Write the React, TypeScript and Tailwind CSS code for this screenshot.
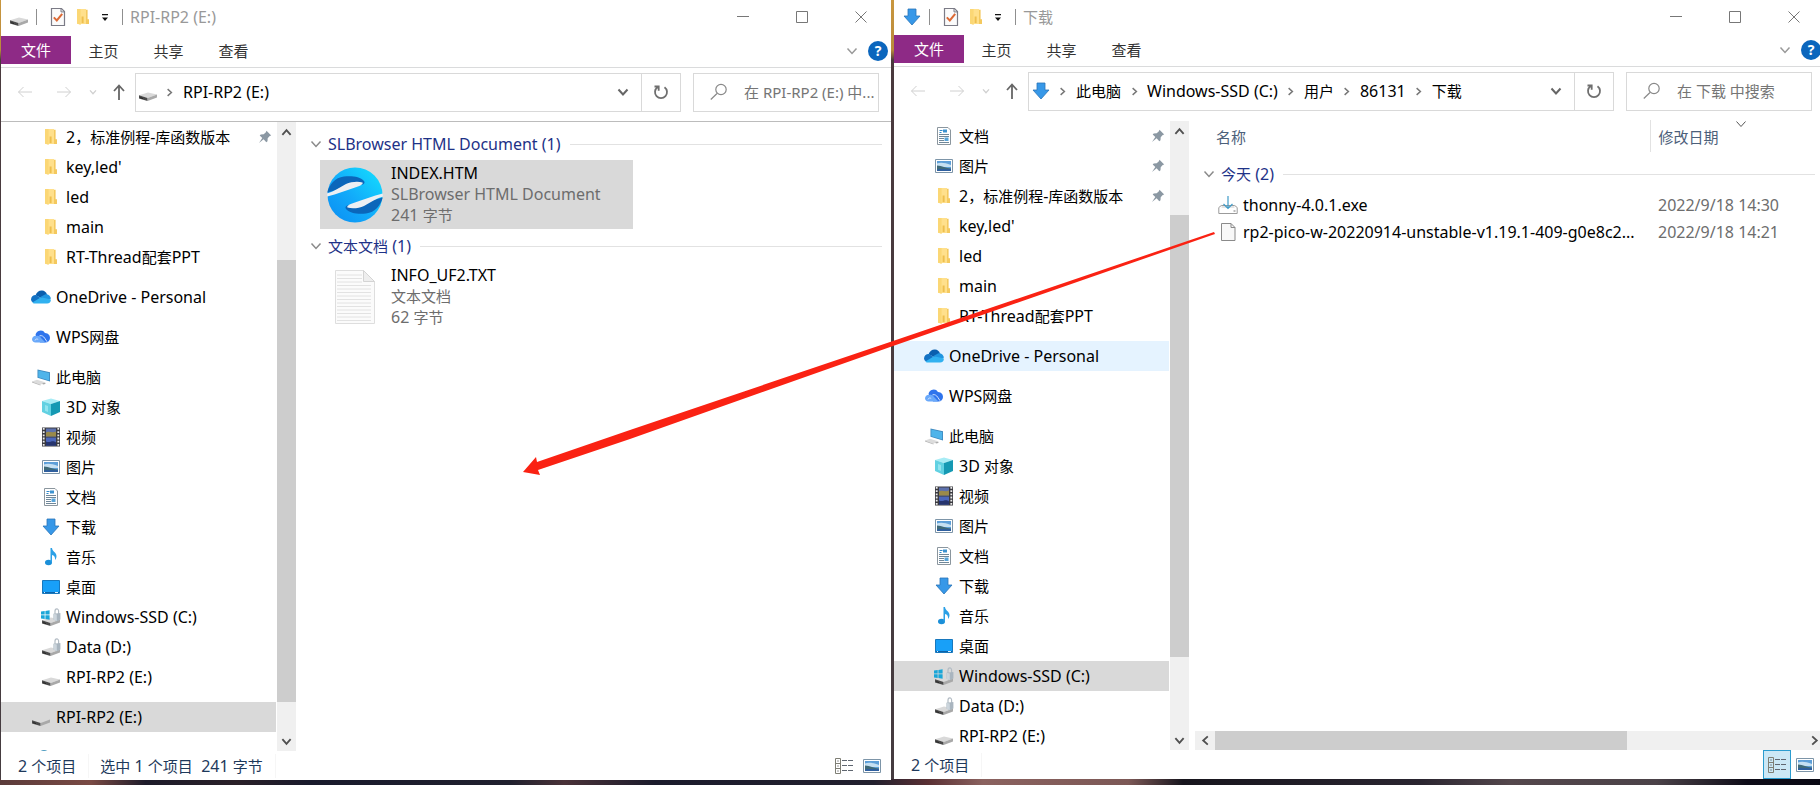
import { type ReactNode } from "react";
import clsx from "clsx";

type IconProps = { className?: string };

/* ---------- icons ---------- */

const DriveShape = () => (
  <>
    <path d="M1 13.2 10 10.4 19 12.4 9.6 16z" fill="#d9d9d9" />
    <path d="M1 13.2 9.6 16v3L1 16.4z" fill="#4a4a4a" />
    <path d="M9.6 16 19 12.4v3L9.6 19z" fill="#a9a9a9" />
    <path d="M2.2 15.2 5 16v.9l-2.8-.8z" fill="#222" />
  </>
);

const DriveIcon = ({ className }: IconProps) => (
  <svg viewBox="0 0 20 20" className={clsx("size-5", className)}>
    <DriveShape />
  </svg>
);

const LockShape = () => (
  <>
    <path
      d="M14 7V4.200a1.800 2.400 0 0 1 3.600 0V7"
      fill="none"
      stroke="#b3bcc4"
      strokeWidth="1.200"
    />
    <path d="M12.500 6.800 19.400 6v6.400l-3.600 1.800-3.300-1.600z" fill="#a9b5bf" />
    <path d="M12.500 6.800l3.300.8v6.600l-3.300-1.600z" fill="#ccd5dc" />
  </>
);

const LockedDriveIcon = () => (
  <svg viewBox="0 0 20 20" className="size-5">
    <DriveShape />
    <LockShape />
  </svg>
);

const SystemDriveIcon = () => (
  <svg viewBox="0 0 20 20" className="size-5">
    <DriveShape />
    <LockShape />
    <path
      d="M0 4.6 3.7 4v3.6H0zM4.4 3.9 8.6 3.2v4.4H4.4zM0 8.3h3.7v3.6L0 11.4zM4.4 8.3h4.2v4.5l-4.2-.7z"
      fill="#19a6d8"
    />
  </svg>
);

const FolderIcon = () => (
  <svg viewBox="0 0 20 20" className="size-5">
    <path d="M4 2h9v15H4z" fill="#ffe08c" />
    <path d="M13 2.8h1.6v9.4H16V17h-3z" fill="#f4c95f" />
    <path d="M4 2h3.6v16L4 16.6z" fill="#fbd775" />
    <path d="M8.6 9.5h2v6.6h-2z" fill="#eebf4e" />
  </svg>
);

const DownloadIcon = () => (
  <svg viewBox="0 0 20 20" className="size-5">
    <path
      d="M6 2h8v7h4l-8 9-8-9h4z"
      fill="#3798e8"
      stroke="#2a74b8"
      strokeWidth=".8"
    />
  </svg>
);

const CheckDocIcon = () => (
  <svg viewBox="0 0 20 20" className="size-5">
    <path
      d="M3.5 1.5h10l3 3v14h-13z"
      fill="#fbfbfb"
      stroke="#7b7b86"
      strokeWidth="1.2"
    />
    <path d="M13 1.5v3.4h3.5" fill="none" stroke="#7b7b86" />
    <path
      d="m5.8 10.4 3 3 5.4-6.6"
      fill="none"
      stroke="#dc6a36"
      strokeWidth="2"
    />
  </svg>
);

const OneDriveIcon = () => (
  <svg viewBox="0 0 20 20" className="size-5">
    <path
      d="M4.6 8.3C5.6 5 8.3 3.4 11 3.6c2.4.2 4.2 1.6 5 3.8l-4 4.6z"
      fill="#0a5fae"
    />
    <path
      d="M0 12.6C0 9.8 2.2 7.8 5 8l8.5 5.6L2 15.6A3.5 3.5 0 0 1 0 12.6z"
      fill="#1272c4"
    />
    <path d="M9.8 9.8 14 7.4c3-.6 5.6 1.6 5.9 4.2l-3.9 3z" fill="#1f95e0" />
    <path
      d="m1.4 15.4 8.6-5.2 9.9 2.4c0 2.4-1.5 4-3.9 4H4.2c-1.1 0-2.1-.4-2.8-1.2z"
      fill="#31b1f0"
    />
  </svg>
);

const WpsCloudIcon = () => (
  <svg viewBox="0 0 20 20" className="size-5">
    <path
      d="M4.5 8A5.2 5.2 0 0 1 14 6c3.500.2 5 2.500 5 5 0 2.600-2 4.500-4.500 4.500H9z"
      fill="#2f74ec"
    />
    <path
      d="M1 12.300A3.600 3.600 0 0 1 5.500 9c2-.6 3.500.5 4.500 2l4.500 4.500h-10C2.500 15.500 1 14 1 12.300z"
      fill="#6aa9fa"
    />
    <path
      d="M8.500 8.800c2.500-.6 4 .6 5.200 2.400l2.300 3.500M4 13.500c.3-1.500 2-2 3.200-1"
      fill="none"
      stroke="#cfe2ff"
    />
  </svg>
);

const ComputerIcon = () => (
  <svg viewBox="0 0 20 20" className="size-5">
    <path d="M6.5 2.5 19 5.2v9.3L6.5 10.8z" fill="#3c87bd" />
    <path d="M7.3 3.6 18.2 6v7.5L7.3 10.2z" fill="#4fb4ea" />
    <path d="M10 14.8 15 16l-2 1.600-5-1.300z" fill="#a8a8a8" />
    <path d="m1 14.600 5-1.800 8 2.400-4.500 2.500z" fill="#dcdcdc" />
    <path d="m1 14.600 8.500 3.100v.8L1 15.400z" fill="#b6b6b6" />
  </svg>
);

const CubeIcon = () => (
  <svg viewBox="0 0 20 20" className="size-5">
    <path d="M1 4 10 1.5 19 4l-9 3z" fill="#a8ecf5" />
    <path d="M1 4 10 7v12L1 15z" fill="#62d1e2" />
    <path d="M19 4 10 7v12l9-4z" fill="#1599b3" />
    <path d="m4 8 3 1v6l-3-1.200z" fill="#92e4ef" />
  </svg>
);

const VideoIcon = () => (
  <svg viewBox="0 0 20 20" className="size-5">
    <path d="M1 .5h18v19H1z" fill="#3a3a40" />
    <path d="M5 1.500h10v8H5z" fill="#5d71ad" />
    <path d="M5 10.500h10v8H5z" fill="#4b66bb" />
    <path d="M5 5.500c3-2 6 1 10-1v5H5z" fill="#9a8a4a" />
    <path d="M5 14.500c4 2 6-2 10 1v3H5z" fill="#26346e" />
    <path
      d="M2.700 1v18.500M17.300 1v18.500"
      stroke="#ececec"
      strokeWidth="1.800"
      strokeDasharray="1.800 1.400"
    />
  </svg>
);

const PictureIcon = () => (
  <svg viewBox="0 0 20 20" className="size-5">
    <path d="M1.500 3.500h17v13h-17z" fill="#fff" stroke="#7d95a8" />
    <path d="M3 5h14v10H3z" fill="#5d9fd8" />
    <path d="M3 7.500c3-1.500 8-1 14 1.500v2H3z" fill="#c5e0f2" />
    <path d="M3 9.500c5 .5 9 2.500 14 3V15H3z" fill="#3f6a78" />
    <path d="M3 13.500c5-1 9 0 14-.5v2H3z" fill="#2f5f9f" />
  </svg>
);

const DocumentIcon = () => (
  <svg viewBox="0 0 20 20" className="size-5">
    <path
      d="M3.500 1.500H14L16.500 4v14.500h-13z"
      fill="#fff"
      stroke="#8b969e"
    />
    <path d="M5.500 4.500h3M5.500 6.500h2" stroke="#2f87c8" />
    <path d="M9 3.500h4v3H9z" fill="#3d93d0" />
    <path
      d="M5 8.500h10M5 10.500h10M5 12.500h5M5 14.500h5M5 16.500h10"
      stroke="#6f8799"
    />
    <path d="M10.500 11.500h4v3.500h-4z" fill="#58a4d8" />
  </svg>
);

const MusicIcon = () => (
  <svg viewBox="0 0 20 20" className="size-5">
    <ellipse cx="7.500" cy="15.500" rx="3.500" ry="2.800" fill="#1b8fd8" />
    <path
      d="M9.500 15.500V1h1.500c.3 3.500 4.500 4.500 4.500 8 0 1.700-.6 3-1.500 4 .4-3-.8-4.500-3-5v7.500z"
      fill="#2ba0e6"
    />
  </svg>
);

const DesktopIcon = () => (
  <svg viewBox="0 0 20 20" className="size-5">
    <path d="M1.500 3.500h17v13h-17z" fill="#18a0f8" stroke="#1878bd" />
    <path d="M2 15.500h16" stroke="#0d62a8" />
    <path d="M3 15.500h1M14 15.500h3" stroke="#d8efff" />
  </svg>
);

const GlobeIcon = () => (
  <svg viewBox="0 0 20 20" className="size-5">
    <circle cx="13" cy="9" r="6" fill="#4d9cc0" />
  </svg>
);

const PinIcon = () => (
  <svg viewBox="0 0 14 14" className="size-[14px]">
    <path
      d="M8.500.8 13.200 5.500l-1.500.6-2 2.200-.2 3-1.200.9-2.700-2.900L1 13l3.300-5L1.700 5.500l1-1 3-.3 2.200-2z"
      fill="#8b98a3"
    />
  </svg>
);

const DetailsViewIcon = () => (
  <svg viewBox="0 0 20 18" className="h-[18px] w-5" fill="none">
    <path d="M1.500 1.500h5v15h-5zM1.500 6.500h5M1.500 11.500h5" stroke="#7e7e74" />
    <path d="M3.500 4h1M3.500 9h1M3.500 14h1" stroke="#333" />
    <path
      d="M8 3.500h5M14 3.500h5M8 8.500h5M14 8.500h5M8 13.500h5M14 13.500h5"
      stroke="#5f6670"
    />
  </svg>
);

const SetupIcon = () => (
  <svg viewBox="0 0 20 20" className="size-5" fill="none">
    <path d="M.8 18.500v-6l2.500-2h13.400l2.500 2v6z" stroke="#9b9b9b" />
    <path d="M3.500 12h13" stroke="#c9c9c9" />
    <path
      d="M10 1v12M5.500 9l4.500 4.500L14.500 9"
      stroke="#3f9bc8"
      strokeWidth="1.200"
    />
    <path d="M15.500 16h2" stroke="#777" />
  </svg>
);

const BlankFileIcon = () => (
  <svg viewBox="0 0 20 20" className="size-5">
    <path d="M3.500 1.500h9.500l4 4v13H3.500z" fill="#f8f8f8" stroke="#8a8a8a" />
    <path d="M13 1.500v4h4" fill="none" stroke="#8a8a8a" />
  </svg>
);

// one half of the swirl, the other half is the same shape turned around
const LogoSwirl = () => (
  <>
    <path
      d="M.3 25.500C2 18 8 10.500 17 9.500c8-.8 16 0 20 4.500 1 1.500.5 2.500-1 3.500L20 20z"
      fill="#0b66ba"
    />
    <path
      d="M0 26.500C8 24 13 20 19 17c5-2.300 12-3 16.500-1.500 1 1.500-2 3.200-6 4.500C20 23.200 10 27 .2 29.500z"
      fill="#eceff3"
    />
  </>
);

const BrowserLogo = () => (
  <svg viewBox="0 0 56 56" className="size-14">
    <defs>
      <linearGradient id="logo-fill" x1="0" y1="1" x2="1" y2="0">
        <stop offset="0" stopColor="#0a8cf2" />
        <stop offset=".45" stopColor="#12aafa" />
        <stop offset="1" stopColor="#14e2ff" />
      </linearGradient>
    </defs>
    <circle cx="28" cy="28" r="27.500" fill="url(#logo-fill)" />
    <LogoSwirl />
    <g transform="rotate(180 28 28)">
      <LogoSwirl />
    </g>
  </svg>
);

const TextFileIcon = () => (
  <svg viewBox="0 0 56 56" className="size-14">
    <path d="M8.500 1.500h28l11 11v42h-39z" fill="#fbfbfb" stroke="#dedede" />
    <path
      d="M10 6h25M10 9.500h25M10 13h25M10 16.500h34M10 20h34M10 23.500h34M10 27h34M10 30.500h34M10 34h34M10 37.500h34M10 41h34M10 44.500h34M10 48h34M10 51.500h34"
      stroke="#e2e2e2"
    />
    <path d="M36.500 1.500v11h11z" fill="#eee" stroke="#d4d4d4" />
  </svg>
);

const chevrons = {
  up: "m1.500 8.500 4.500-5 4.500 5",
  down: "m1.500 3.500 4.500 5 4.500-5",
  left: "m8.500 1.500-5 4.500 5 4.500",
  right: "m3.500 1.500 5 4.500-5 4.500",
};

const Chevron = ({
  dir,
  className = "size-3",
}: {
  dir: keyof typeof chevrons;
  className?: string;
}) => (
  <svg
    viewBox="0 0 12 12"
    className={className}
    fill="none"
    stroke="currentColor"
    strokeWidth="2"
  >
    <path d={chevrons[dir]} />
  </svg>
);

const Arrow = ({ className }: IconProps) => (
  <svg
    viewBox="0 0 16 16"
    className={clsx("size-4", className)}
    fill="none"
    stroke="currentColor"
  >
    <path d="M15 8H1.500M6.500 3 1.500 8l5 5" />
  </svg>
);

/* ---------- text ---------- */

// Han characters are set one pixel smaller than the Latin text next to them
const Label = ({ text }: { text: string }) => (
  <>
    {text.split(/([\u4e00-\u9fff，]+)/).map((part, i) =>
      i % 2 ? (
        <span key={i} className="text-[15px]">
          {part}
        </span>
      ) : (
        part
      )
    )}
  </>
);

/* ---------- data ---------- */

type NavItem = {
  text: string;
  icon: ReactNode;
  root?: boolean;
  pinned?: boolean;
  state?: "selected" | "hover";
};

const folders: NavItem[] = [
  { text: "2，标准例程-库函数版本", icon: <FolderIcon />, pinned: true },
  { text: "key,led'", icon: <FolderIcon /> },
  { text: "led", icon: <FolderIcon /> },
  { text: "main", icon: <FolderIcon /> },
  { text: "RT-Thread配套PPT", icon: <FolderIcon /> },
];

const clouds = (state?: NavItem["state"]): NavItem[] => [
  { text: "OneDrive - Personal", icon: <OneDriveIcon />, root: true, state },
  { text: "WPS网盘", icon: <WpsCloudIcon />, root: true },
];

const computer = (state?: NavItem["state"]): NavItem[] => [
  { text: "此电脑", icon: <ComputerIcon />, root: true },
  { text: "3D 对象", icon: <CubeIcon /> },
  { text: "视频", icon: <VideoIcon /> },
  { text: "图片", icon: <PictureIcon /> },
  { text: "文档", icon: <DocumentIcon /> },
  { text: "下载", icon: <DownloadIcon /> },
  { text: "音乐", icon: <MusicIcon /> },
  { text: "桌面", icon: <DesktopIcon /> },
  { text: "Windows-SSD (C:)", icon: <SystemDriveIcon />, state },
  { text: "Data (D:)", icon: <LockedDriveIcon /> },
  { text: "RPI-RP2 (E:)", icon: <DriveIcon /> },
];

const leftNav: NavItem[] = [
  ...folders,
  ...clouds(),
  ...computer(),
  { text: "RPI-RP2 (E:)", icon: <DriveIcon />, root: true, state: "selected" },
  { text: "", icon: <GlobeIcon />, root: true },
];

const rightNav: NavItem[] = [
  { text: "文档", icon: <DocumentIcon />, pinned: true },
  { text: "图片", icon: <PictureIcon />, pinned: true },
  ...folders,
  ...clouds("hover"),
  ...computer("selected"),
];

const files = [
  { name: "thonny-4.0.1.exe", date: "2022/9/18 14:30", icon: <SetupIcon /> },
  {
    name: "rp2-pico-w-20220914-unstable-v1.19.1-409-g0e8c2...",
    date: "2022/9/18 14:21",
    icon: <BlankFileIcon />,
  },
];

/* ---------- window parts ---------- */

const TitleBar = ({
  icon,
  title,
  className,
}: {
  icon: ReactNode;
  title: string;
  className: string;
}) => (
  <header className={clsx("flex shrink-0 items-center pb-[2px]", className)}>
    <div className="flex w-[35px] justify-center">{icon}</div>
    <div className="h-4 w-px bg-[#8f8f8f]" />
    <button className="ml-[11px]" aria-label="属性">
      <CheckDocIcon />
    </button>
    <button className="ml-[5px]" aria-label="新建文件夹">
      <FolderIcon />
    </button>
    <button className="ml-[7px]" aria-label="自定义快速访问工具栏">
      <svg viewBox="0 0 10 10" className="size-[10px]">
        <path d="M2 2h6v1.300H2zM2 5.500h6L5 9z" fill="#111" />
      </svg>
    </button>
    <div className="ml-[12px] h-4 w-px bg-[#8f8f8f]" />
    <h1 className="ml-[7px] text-[#999]">
      <Label text={title} />
    </h1>
    <div className="ml-auto flex h-full pr-px text-[#777]">
      {[
        { label: "最小化", d: "M0 5.500h12" },
        { label: "最大化", d: "M.5.500h11v11H.5z" },
        { label: "关闭", d: "m.5.500 11 11m0-11-11 11" },
      ].map(({ label, d }) => (
        <button
          key={label}
          aria-label={label}
          className="flex w-[59px] items-center justify-center"
        >
          <svg
            viewBox="0 0 12 12"
            className="size-3 overflow-visible"
            fill="none"
            stroke="currentColor"
          >
            <path d={d} />
          </svg>
        </button>
      ))}
    </div>
  </header>
);

const Ribbon = () => (
  <div className="flex h-8 shrink-0 items-start border-b border-[#dadbdc] text-[15px] text-[#333]">
    <button className="h-7 w-[70px] bg-[#8e2a86] text-white">文件</button>
    {["主页", "共享", "查看"].map((tab) => (
      <button key={tab} className="h-[30px] w-[65px]">
        {tab}
      </button>
    ))}
    <button className="mt-[9px] ml-auto text-[#999]" aria-label="展开功能区">
      <svg
        viewBox="0 0 12 12"
        className="size-3"
        fill="none"
        stroke="currentColor"
        strokeWidth="1.500"
      >
        <path d={chevrons.down} />
      </svg>
    </button>
    <button
      aria-label="帮助"
      className="mt-[5px] mr-[3px] ml-[10px] flex size-5 items-center justify-center rounded-full bg-[#0b66bd] text-sm font-bold text-white"
    >
      ?
    </button>
  </div>
);

const AddressBar = ({
  icon,
  crumbs,
  placeholder,
}: {
  icon: ReactNode;
  crumbs: string[];
  placeholder: string;
}) => (
  <div className="flex h-[53px] shrink-0 items-center pr-3 pb-[5px]">
    <nav className="flex w-[134px] shrink-0 items-center text-[#d0d0d0]">
      <button className="ml-4" aria-label="后退">
        <Arrow />
      </button>
      <button className="ml-[23px]" aria-label="前进">
        <Arrow className="rotate-180" />
      </button>
      <button className="ml-[17px]" aria-label="最近浏览的位置">
        <Chevron dir="down" className="size-2" />
      </button>
      <button className="ml-[14px] text-[#666]" aria-label="上移">
        <svg
          viewBox="0 0 16 16"
          className="size-4"
          fill="none"
          stroke="currentColor"
          strokeWidth="1.800"
        >
          <path d="M8 16V1.500M3 7l5-5.500L13 7" />
        </svg>
      </button>
    </nav>
    <div className="flex h-[39px] min-w-0 flex-1 items-center border border-[#d9d9d9]">
      <div className="ml-[2px]">{icon}</div>
      {crumbs.map((crumb, i) => (
        <div key={crumb} className="flex items-center">
          <div
            className={clsx(
              "flex justify-center text-[#777]",
              i === 0 ? "mr-[2px] w-[23px]" : "w-[26px]"
            )}
          >
            <Chevron dir="right" className="size-[9px]" />
          </div>
          <button className="whitespace-nowrap">
            <Label text={crumb} />
          </button>
        </div>
      ))}
      <button
        className="ml-auto flex w-[37px] justify-center text-[#666]"
        aria-label="以前的位置"
      >
        <Chevron dir="down" />
      </button>
      <button
        className="flex h-full w-[39px] items-center justify-center border-l border-[#d9d9d9]"
        aria-label="刷新"
      >
        <svg
          viewBox="0 0 16 16"
          className="size-4"
          fill="none"
          stroke="#6f6f6f"
          strokeWidth="1.800"
        >
          <path d="M11.500 3.200a6 6 0 1 1-7 0M1.500 2.500h4.200v4.300" />
        </svg>
      </button>
    </div>
    <label className="ml-3 flex h-[39px] w-[186px] shrink-0 items-center border border-[#d9d9d9]">
      <svg
        viewBox="0 0 18 18"
        className="ml-4 size-[18px] shrink-0"
        fill="none"
        stroke="#888"
        strokeWidth="1.200"
      >
        <circle cx="11" cy="6.500" r="5.200" />
        <path d="M7 10.500.8 16.500" />
      </svg>
      <input
        type="text"
        aria-label="搜索"
        placeholder={placeholder}
        className="ml-4 w-0 flex-1 text-[15px] outline-none placeholder:text-[#757575]"
      />
    </label>
  </div>
);

const Sidebar = ({ items, offset }: { items: NavItem[]; offset: number }) => (
  <>
    <ul className="w-[275px] shrink-0 overflow-hidden">
      {items.map(({ text, icon, root, pinned, state }, i) => (
        <li key={i} className={clsx(root && "mt-[10px]")}>
          <button
            className={clsx(
              "flex h-[30px] w-full items-center gap-[5px] pr-1",
              root ? "pl-[30px]" : "pl-10",
              state === "selected" && "bg-[#d9d9d9]",
              state === "hover" && "bg-[#e5f3ff]"
            )}
          >
            {icon}
            <span className="whitespace-nowrap">
              <Label text={text} />
            </span>
            {pinned && (
              <span className="ml-auto">
                <PinIcon />
              </span>
            )}
          </button>
        </li>
      ))}
    </ul>
    <div className="ml-px flex w-[19px] shrink-0 flex-col bg-[#f0f0f0] text-[#505050]">
      <button
        className="flex h-5 items-center justify-center"
        aria-label="向上滚动"
      >
        <Chevron dir="up" className="size-[11px]" />
      </button>
      <div className="flex min-h-0 flex-1 flex-col">
        <div style={{ height: `${offset}%` }} />
        <div className="h-3/4 bg-[#cdcdcd]" />
      </div>
      <button
        className="flex h-5 items-center justify-center"
        aria-label="向下滚动"
      >
        <Chevron dir="down" className="size-[11px]" />
      </button>
    </div>
  </>
);

const GroupHeader = ({ text }: { text: string }) => (
  <div className="flex h-[30px] items-center pr-[9px] pl-[14px] text-[#1e3287]">
    <svg
      viewBox="0 0 12 12"
      className="size-3"
      fill="none"
      stroke="#8a8a8a"
      strokeWidth="1.500"
    >
      <path d={chevrons.down} />
    </svg>
    <span className="mr-[9px] ml-[6px] whitespace-nowrap">
      <Label text={text} />
    </span>
    <div className="h-px flex-1 bg-[#e2e2e2]" />
  </div>
);

const Tile = ({
  icon,
  name,
  kind,
  size,
  selected,
}: {
  icon: ReactNode;
  name: string;
  kind: string;
  size: string;
  selected?: boolean;
}) => (
  <button
    className={clsx(
      "mt-px ml-6 flex h-[69px] w-[313px] items-center gap-2 pl-[7px] text-left",
      selected && "bg-[#d9d9d9]"
    )}
  >
    {icon}
    <div className="leading-[21px] text-[#6d6d6d]">
      <p className="text-black">{name}</p>
      <p>
        <Label text={kind} />
      </p>
      <p>
        <Label text={size} />
      </p>
    </div>
  </button>
);

const StatusBar = ({
  items,
  details,
}: {
  items: string[];
  details?: boolean;
}) => (
  <footer className="flex h-[29px] shrink-0 items-center pr-[9px] pl-[17px] text-[#1e395b]">
    {items.map((item, i) => (
      <span
        key={item}
        className={clsx(
          "border-r border-[#f6f6f6] pr-3 whitespace-pre",
          i > 0 && "pl-[11px]"
        )}
      >
        <Label text={item} />
      </span>
    ))}
    <button
      aria-label="详细信息"
      className={clsx(
        "ml-auto flex h-[29px] w-[28px] items-center justify-center",
        details && "border border-[#2b9ccf] bg-[#cbe8f6]"
      )}
    >
      <DetailsViewIcon />
    </button>
    <button aria-label="大图标" className="ml-1">
      <PictureIcon />
    </button>
  </footer>
);

const FileTable = () => (
  <table className="w-full table-fixed border-collapse text-left">
    <colgroup>
      <col className="w-[461px]" />
      <col />
    </colgroup>
    <thead className="text-[15px] text-[#4c607a]">
      <tr className="h-8">
        <th className="border-r border-[#e2e2e2] pt-[2px] pl-[27px] font-normal">
          名称
        </th>
        <th className="relative pt-[2px] pl-2 font-normal">
          修改日期
          <span className="absolute top-0 left-[84px] text-[#555]">
            <svg
              viewBox="0 0 12 8"
              className="h-2 w-3"
              fill="none"
              stroke="currentColor"
            >
              <path d="m1.500 1.500 4.500 5 4.500-5" />
            </svg>
          </span>
        </th>
      </tr>
    </thead>
    <tbody>
      <tr>
        <td colSpan={2} className="pt-[7px] pb-[2px]">
          <GroupHeader text="今天 (2)" />
        </td>
      </tr>
      {files.map(({ name, date, icon }) => (
        <tr key={name} className="h-[27px]">
          <td>
            <div className="flex items-center gap-[5px] pl-[29px] whitespace-nowrap">
              {icon}
              {name}
            </div>
          </td>
          <td className="pl-2 text-[#6d6d6d]">{date}</td>
        </tr>
      ))}
    </tbody>
  </table>
);

const DragArrow = () => (
  <svg
    viewBox="0 0 1820 785"
    preserveAspectRatio="none"
    className="pointer-events-none absolute inset-0 size-full"
  >
    <path
      d="M523 472 536 457l1 5 93-32 263-89 321-109 1 2-322 112-263 93-92 31 2 5z"
      fill="#fa2213"
    />
  </svg>
);

const App = () => {
  return (
    <div
      className="relative h-screen overflow-hidden bg-[linear-gradient(90deg,#5b3b3a_0%,#7a4a44_5%,#1d1b2a_8%,#2a2028_13%,#191a2c_17%,#20202e_28%,#4a3238_31%,#1b1b2c_36%,#22202e_48%,#5a3034_51%,#8b625f_54%,#7c5856_62%,#17151d_65%,#2a2530_78%,#54474c_83%,#4b4248_91%,#0e0c18_96%,#0a0914_100%)] text-base text-black"
      style={{
        fontFamily: '"Noto Sans", "Noto Sans CJK SC", sans-serif',
      }}
    >
      <div className="grid h-full grid-cols-[890fr_926fr] gap-[3px] bg-[linear-gradient(#c9973f_0px,#b98a3c_50px,#4a3a3e_60px,#453c40_100%)] bg-size-[100%_calc(100%-6px)] bg-no-repeat pb-[5px] pl-px">
        <section className="flex min-h-0 min-w-0 flex-col bg-white">
          <TitleBar
            className="h-9"
            icon={<DriveIcon />}
            title="RPI-RP2 (E:)"
          />
          <Ribbon />
          <AddressBar
            icon={<DriveIcon />}
            crumbs={["RPI-RP2 (E:)"]}
            placeholder="在 RPI-RP2 (E:) 中..."
          />
          <div className="flex min-h-0 flex-1 border-t border-[#bcbcbc]">
            <Sidebar items={leftNav} offset={20} />
            <main className="min-w-0 flex-1 pt-[7px]">
              <GroupHeader text="SLBrowser HTML Document (1)" />
              <Tile
                icon={<BrowserLogo />}
                name="INDEX.HTM"
                kind="SLBrowser HTML Document"
                size="241 字节"
                selected
              />
              <div className="mt-[2px]">
                <GroupHeader text="文本文档 (1)" />
              </div>
              <Tile
                icon={<TextFileIcon />}
                name="INFO_UF2.TXT"
                kind="文本文档"
                size="62 字节"
              />
            </main>
          </div>
          <StatusBar items={["2 个项目", "选中 1 个项目  241 字节"]} />
        </section>

        <section className="mb-px min-h-0 min-w-0 overflow-hidden bg-white">
          {/* the window runs a little past the edge of the screen */}
          <div className="-mr-1 flex h-full flex-col">
            <TitleBar
              className="h-[35px]"
              icon={<DownloadIcon />}
              title="下载"
            />
            <Ribbon />
            <AddressBar
              icon={<DownloadIcon />}
              crumbs={["此电脑", "Windows-SSD (C:)", "用户", "86131", "下载"]}
              placeholder="在 下载 中搜索"
            />
            <div className="flex min-h-0 flex-1">
              <div className="flex min-h-0 pt-px">
                <Sidebar items={rightNav} offset={12.6} />
              </div>
              <main className="flex min-w-0 flex-1 flex-col">
                <FileTable />
                <div className="mt-auto ml-[6px] flex h-[19px] bg-[#f0f0f0] text-[#505050]">
                  <button
                    className="flex w-5 items-center justify-center"
                    aria-label="向左滚动"
                  >
                    <Chevron dir="left" className="size-[11px]" />
                  </button>
                  <div className="flex-1">
                    <div className="h-full w-[70%] bg-[#cdcdcd]" />
                  </div>
                  <button
                    className="flex w-5 items-center justify-center"
                    aria-label="向右滚动"
                  >
                    <Chevron dir="right" className="size-[11px]" />
                  </button>
                </div>
              </main>
            </div>
            <StatusBar items={["2 个项目"]} details />
          </div>
        </section>
      </div>
      <DragArrow />
    </div>
  );
};

export default App;
